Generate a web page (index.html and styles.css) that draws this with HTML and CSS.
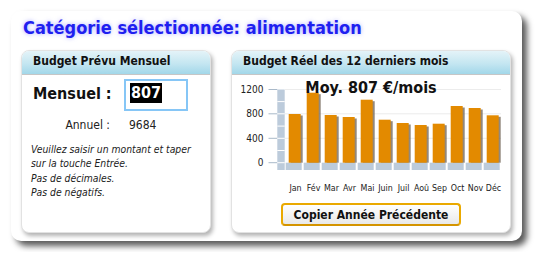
FILE: index.html
```html
<!DOCTYPE html>
<html lang="fr">
<head>
<meta charset="utf-8">
<title>Budget</title>
<link rel="stylesheet" href="styles.css">
</head>
<body>
<div class="card">
  <h1 class="title">Catégorie sélectionnée: alimentation</h1>
  <div class="panels">
    <section class="panel panel-left">
      <div class="panel-head">Budget Prévu Mensuel</div>
      <div class="row-monthly">
        <span class="lbl-monthly">Mensuel :</span>
        <div class="amount-box"><span class="amount-sel">807</span></div>
      </div>
      <div class="row-annual">
        <span class="lbl-annual">Annuel :</span>
        <span class="val-annual">9684</span>
      </div>
      <p class="hint">Veuillez saisir un montant et taper<br>sur la touche Entrée.<br>Pas de décimales.<br>Pas de négatifs.</p>
    </section>
    <section class="panel panel-right">
      <div class="panel-head">Budget Réel des 12 derniers mois</div>
      <svg class="chart" width="278" height="125" viewBox="232 75 278 125" xmlns="http://www.w3.org/2000/svg">
        <g class="grid" stroke="#ececec" stroke-width="1">
          <line x1="285" y1="89.5" x2="501" y2="89.5"/>
          <line x1="285" y1="113.8" x2="501" y2="113.8"/>
          <line x1="285" y1="138.3" x2="501" y2="138.3"/>
        </g>
        <g stroke="#a9b9c9" stroke-width="1">
          <line x1="268.5" y1="89.5" x2="277.3" y2="89.5"/>
          <line x1="268.5" y1="113.8" x2="277.3" y2="113.8"/>
          <line x1="268.5" y1="138.3" x2="277.3" y2="138.3"/>
          <line x1="268.5" y1="162.7" x2="277.3" y2="162.7"/>
        </g>
        <g class="axis" font-size="10" fill="#222" text-anchor="end">
          <text x="263.5" y="92.8">1200</text>
          <text x="263.5" y="117.2">800</text>
          <text x="263.5" y="141.7">400</text>
          <text x="263.5" y="166.1">0</text>
        </g>
        <rect x="277.3" y="89.5" width="7.4" height="80.5" fill="#bccbdb"/>
        <g stroke="#ffffff" stroke-width="1">
          <line x1="277.3" y1="101.6" x2="284.7" y2="101.6"/>
          <line x1="277.3" y1="113.8" x2="284.7" y2="113.8"/>
          <line x1="277.3" y1="126.1" x2="284.7" y2="126.1"/>
          <line x1="277.3" y1="138.3" x2="284.7" y2="138.3"/>
          <line x1="277.3" y1="150.5" x2="284.7" y2="150.5"/>
          <line x1="277.3" y1="162.7" x2="284.7" y2="162.7"/>
        </g>
        <g fill="#bccbdb">
          <rect x="285.7" y="162.7" width="16" height="7.3"/>
          <rect x="303.7" y="162.7" width="16" height="7.3"/>
          <rect x="321.7" y="162.7" width="16" height="7.3"/>
          <rect x="339.7" y="162.7" width="16" height="7.3"/>
          <rect x="357.7" y="162.7" width="16" height="7.3"/>
          <rect x="375.7" y="162.7" width="16" height="7.3"/>
          <rect x="393.7" y="162.7" width="16" height="7.3"/>
          <rect x="411.7" y="162.7" width="16" height="7.3"/>
          <rect x="429.7" y="162.7" width="16" height="7.3"/>
          <rect x="447.7" y="162.7" width="16" height="7.3"/>
          <rect x="465.7" y="162.7" width="16" height="7.3"/>
          <rect x="483.7" y="162.7" width="16" height="7.3"/>
        </g>
        <g fill="#6e6152" opacity="0.75">
          <rect x="290.7" y="115.5" width="12" height="47.2"/>
          <rect x="308.7" y="94.2" width="12" height="68.5"/>
          <rect x="326.7" y="116.5" width="12" height="46.2"/>
          <rect x="344.7" y="118.5" width="12" height="44.2"/>
          <rect x="362.7" y="101.2" width="12" height="61.5"/>
          <rect x="380.7" y="121.2" width="12" height="41.5"/>
          <rect x="398.7" y="124.5" width="12" height="38.2"/>
          <rect x="416.7" y="126.5" width="12" height="36.2"/>
          <rect x="434.7" y="125.2" width="12" height="37.5"/>
          <rect x="452.7" y="107.5" width="12" height="55.2"/>
          <rect x="470.7" y="109.5" width="12" height="53.2"/>
          <rect x="488.7" y="116.8" width="12" height="45.9"/>
        </g>
        <g fill="#e38a00">
          <rect x="288.7" y="114" width="12" height="48.7"/>
          <rect x="306.7" y="92.7" width="12" height="70"/>
          <rect x="324.7" y="115" width="12" height="47.7"/>
          <rect x="342.7" y="117" width="12" height="45.7"/>
          <rect x="360.7" y="99.7" width="12" height="63"/>
          <rect x="378.7" y="119.7" width="12" height="43"/>
          <rect x="396.7" y="123" width="12" height="39.7"/>
          <rect x="414.7" y="125" width="12" height="37.7"/>
          <rect x="432.7" y="123.7" width="12" height="39"/>
          <rect x="450.7" y="106" width="12" height="56.7"/>
          <rect x="468.7" y="108" width="12" height="54.7"/>
          <rect x="486.7" y="115.3" width="12" height="47.4"/>
        </g>
        <text class="avg" x="371" y="93.3" text-anchor="middle" font-size="16" font-weight="bold" fill="#111">Moy. 807 €/mois</text>
        <g class="months" font-size="8.8" fill="#222" text-anchor="middle">
          <text x="295.5" y="190.5">Jan</text>
          <text x="313.5" y="190.5">Fév</text>
          <text x="331.5" y="190.5">Mar</text>
          <text x="349.5" y="190.5">Avr</text>
          <text x="367.5" y="190.5">Mai</text>
          <text x="385.5" y="190.5">Juin</text>
          <text x="403.5" y="190.5">Juil</text>
          <text x="421.5" y="190.5">Aoû</text>
          <text x="439.5" y="190.5">Sep</text>
          <text x="457.5" y="190.5">Oct</text>
          <text x="475.5" y="190.5">Nov</text>
          <text x="493.5" y="190.5">Déc</text>
        </g>
      </svg>
      <div class="btn-row"><button class="btn" type="button">Copier Année Précédente</button></div>
    </section>
  </div>
</div>
</body>
</html>
```

FILE: styles.css
```css
html, body {
  margin: 0;
  background: #ffffff;
}
body {
  padding: 11px;
  font-family: "DejaVu Sans Condensed", "DejaVu Sans", sans-serif;
  font-stretch: condensed;
  color: #111;
}
.card {
  width: 511px;
  height: 230px;
  box-sizing: border-box;
  background: #ffffff;
  border-radius: 10px;
  box-shadow: 5px 5px 6px rgba(0, 0, 0, 0.65);
  padding: 6px 11px 8px 10px;
}
.title {
  margin: 0 0 0 2px;
  height: 22px;
  font-size: 18px;
  line-height: 22px;
  font-weight: bold;
  color: #1f1ff0;
  text-shadow: 0 0 4px rgba(100, 100, 255, 0.55);
}
.panels {
  display: flex;
  gap: 20px;
  margin-top: 11px;
}
.panel {
  height: 183px;
  box-sizing: border-box;
  background: #ffffff;
  border: 1px solid #e2e2e2;
  border-radius: 8px;
  box-shadow: 2px 3px 4px rgba(0, 0, 0, 0.3);
  overflow: hidden;
}
.panel-left { width: 190px; }
.panel-right { width: 280px; }
.panel-head {
  height: 23px;
  line-height: 21px;
  border-bottom: 1px solid #c6c6c6;
  background: linear-gradient(#e4f3f8, #c4e6f1 55%, #a2d7e9);
  font-size: 12px;
  font-weight: bold;
  color: #111;
  padding-left: 11px;
}
.row-monthly {
  display: flex;
  margin-top: 4px;
  height: 32px;
}
.lbl-monthly {
  width: 91px;
  padding-left: 11px;
  margin-top: 5px;
  font-size: 16px;
  font-weight: bold;
  line-height: 20px;
  color: #111;
}
.amount-box {
  width: 64px;
  height: 32px;
  box-sizing: border-box;
  border: 2px solid #86c6f6;
  padding: 2px 4px;
  background: #fff;
}
.amount-sel {
  display: inline-block;
  background: #000;
  color: #fff;
  font-size: 16px;
  font-weight: bold;
  line-height: 20px;
  padding: 0 1px;
}
.row-annual {
  display: flex;
  margin-top: 6px;
  font-size: 12px;
  line-height: 16px;
  color: #222;
}
.lbl-annual {
  width: 88px;
  text-align: right;
}
.val-annual {
  margin-left: 19px;
}
.hint {
  margin: 9px 0 0;
  padding-left: 9px;
  font-size: 10.3px;
  line-height: 14.4px;
  font-style: italic;
  color: #222;
}
.chart {
  display: block;
  font-family: "DejaVu Sans Condensed", "DejaVu Sans", sans-serif;
  font-stretch: condensed;
}
.btn-row {
  display: flex;
  justify-content: center;
  margin-top: 3px;
}
.btn {
  width: 180px;
  height: 23px;
  box-sizing: border-box;
  border: 2px solid #eaa900;
  border-bottom-color: #d49400;
  border-radius: 4px;
  background: linear-gradient(#ffffff, #e9e9e9);
  font-family: "DejaVu Sans Condensed", "DejaVu Sans", sans-serif;
  font-stretch: condensed;
  font-size: 12px;
  font-weight: bold;
  color: #111;
  padding: 0;
}
```
